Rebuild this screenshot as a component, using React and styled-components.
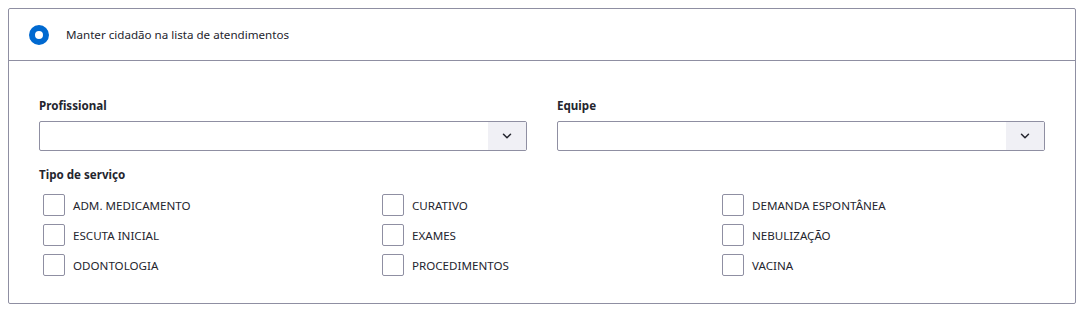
import React from "react";
import styled, { createGlobalStyle } from "styled-components";

const servicos = [
  "ADM. MEDICAMENTO",
  "CURATIVO",
  "DEMANDA ESPONTÂNEA",
  "ESCUTA INICIAL",
  "EXAMES",
  "NEBULIZAÇÃO",
  "ODONTOLOGIA",
  "PROCEDIMENTOS",
  "VACINA",
];

const Chevron = () => (
  <svg width="12" height="12" viewBox="0 0 24 24" fill="none">
    <path
      d="M5 8.5l7 7 7-7"
      stroke="#24252e"
      strokeWidth="3"
      strokeLinecap="round"
      strokeLinejoin="round"
    />
  </svg>
);

const Select = () => (
  <SelectBox>
    <SelectInput />
    <SelectButton>
      <Chevron />
    </SelectButton>
  </SelectBox>
);

const App = () => {
  return (
    <>
      <GlobalStyle />
      <Panel>
        <Header>
          <Radio />
          <HeaderText>Manter cidadão na lista de atendimentos</HeaderText>
        </Header>
        <Body>
          <Fields>
            <Field>
              <Label>Profissional</Label>
              <Select />
            </Field>
            <Field>
              <Label>Equipe</Label>
              <Select />
            </Field>
          </Fields>
          <Label>Tipo de serviço</Label>
          <Checks>
            {servicos.map((s) => (
              <Check key={s}>
                <Box />
                <CheckText>{s}</CheckText>
              </Check>
            ))}
          </Checks>
        </Body>
      </Panel>
    </>
  );
};
export default App;

const GlobalStyle = createGlobalStyle`
  body {
    margin: 8px;
    background: #ffffff;
    font-family: "Noto Sans", "Liberation Sans", sans-serif;
    color: #24252e;
  }
`;
const Panel = styled.div`
  width: 1068px;
  box-sizing: border-box;
  border: 1px solid #8f8fa2;
  border-radius: 2px;
`;
const Header = styled.div`
  height: 51px;
  display: flex;
  align-items: center;
  padding-left: 20px;
  border-bottom: 1px solid #8f8fa2;
`;
const Radio = styled.div`
  width: 20px;
  height: 20px;
  box-sizing: border-box;
  border-radius: 50%;
  border: 6px solid #0069d0;
  background: #fff;
`;
const HeaderText = styled.div`
  margin-left: 17px;
  font-size: 11.6px;
  color: #24252e;
`;
const Body = styled.div`
  padding: 37px 30px 27px 30px;
`;
const Fields = styled.div`
  display: grid;
  grid-template-columns: 1fr 1fr;
  column-gap: 30px;
  margin-bottom: 16px;
`;
const Field = styled.div`
  display: flex;
  flex-direction: column;
`;
const Label = styled.div`
  font-size: 11.6px;
  font-weight: 700;
  color: #24252e;
  line-height: 16px;
  margin-bottom: 7px;
`;
const SelectBox = styled.div`
  height: 30px;
  box-sizing: border-box;
  border: 1px solid #8f8fa2;
  border-radius: 2px;
  display: flex;
`;
const SelectInput = styled.div`
  flex: 1;
`;
const SelectButton = styled.div`
  width: 38px;
  background: #f0f0f5;
  display: flex;
  align-items: center;
  justify-content: center;
`;
const Checks = styled.div`
  display: grid;
  grid-template-columns: 339px 340px 1fr;
  row-gap: 8px;
  padding-left: 4px;
  margin-top: 11px;
`;
const Check = styled.div`
  display: flex;
  align-items: center;
  height: 22px;
`;
const Box = styled.div`
  width: 22px;
  height: 22px;
  box-sizing: border-box;
  border: 1px solid #8f8fa2;
  border-radius: 2px;
  background: #fff;
`;
const CheckText = styled.div`
  margin-left: 8px;
  font-size: 11.6px;
  color: #24252e;
`;
